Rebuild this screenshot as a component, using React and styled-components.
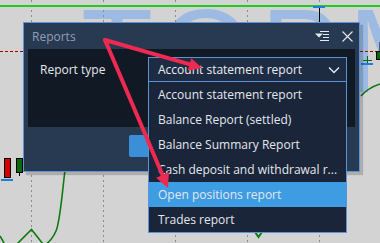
import React from 'react'
import styled, { createGlobalStyle } from 'styled-components'

const GlobalStyle = createGlobalStyle`
  html, body {
    margin: 0;
    padding: 0;
    background: #d3d3d3;
  }
  * { box-sizing: border-box; }
`

const reportTypes = [
  'Account statement report',
  'Balance Report (settled)',
  'Balance Summary Report',
  'Cash deposit and withdrawal r...',
  'Open positions report',
  'Trades report',
]

const Stage = styled.div`
  position: relative;
  width: 380px;
  height: 243px;
  overflow: hidden;
  background: #d3d3d3;
  font-family: "Open Sans", "Noto Sans", sans-serif;
  font-size: 12px;
`

const Watermark = styled.div`
  position: absolute;
  left: 81px;
  top: -8px;
  font-family: "Liberation Sans", Arial, sans-serif;
  font-size: 118px;
  line-height: 118px;
  letter-spacing: 9px;
  color: #9dbae3;
  white-space: nowrap;
  user-select: none;
`

const Layer = styled.svg`
  position: absolute;
  left: 0;
  top: 0;
  pointer-events: none;
`

const Dialog = styled.div`
  position: absolute;
  left: 23px;
  top: 22px;
  width: 337px;
  height: 150px;
  display: flex;
  flex-direction: column;
  background: #283a52;
  border: 1px solid #5d95d8;
  box-shadow: 3px 3px 1px rgba(0, 0, 0, 0.18);
`

const Header = styled.div`
  height: 26px;
  display: flex;
  align-items: center;
  padding: 0 6px 0 8px;
  gap: 13px;
`

const Title = styled.div`
  flex: 1;
  color: #909fb3;
  font-size: 12px;
`

const IconBtn = styled.div`
  display: flex;
  align-items: center;
  justify-content: center;
  color: #e4e9f0;
`

const Panel = styled.div`
  height: 78px;
  margin: 0 4px;
  background: #111925;
  display: flex;
  align-items: flex-start;
  padding: 8px 8px 0 12px;
`

const Label = styled.div`
  width: 108px;
  line-height: 25px;
  color: #e6e8ec;
`

const SelectWrap = styled.div`
  position: relative;
  flex: 1;
`

const SelectBox = styled.div`
  height: 25px;
  display: flex;
  align-items: center;
  justify-content: space-between;
  padding: 0 6px 0 9px;
  background: #1e2c43;
  border: 1px solid #5b93d6;
  color: #e8ecf2;
`

const List = styled.div`
  position: absolute;
  left: 0;
  right: 0;
  top: 25px;
  background: #1b2539;
  border: 1px solid #5b93d6;
  border-top: none;
  z-index: 2;
`

const Item = styled.div`
  height: 25px;
  line-height: 25px;
  padding-left: 9px;
  white-space: nowrap;
  overflow: hidden;
  color: #e2e7ee;
  background: ${p => (p.$active ? '#3d9ce2' : 'transparent')};
`

const Footer = styled.div`
  flex: 1;
  display: flex;
  justify-content: center;
  align-items: flex-start;
  padding-top: 8px;
`

const Button = styled.div`
  width: 125px;
  height: 22px;
  background: #3a8fd6;
  border-radius: 2px;
`

const Chart = () => (
  <Layer width="380" height="243">
    <g stroke="#8c8c8c" strokeWidth="1" strokeDasharray="2 3">
      {[31.5, 103.5, 175.5, 247.5, 319.5].map(x => (
        <line key={x} x1={x} y1="0" x2={x} y2="243" />
      ))}
    </g>
    <line x1="0" y1="6" x2="380" y2="6" stroke="#1fcc1f" strokeWidth="2" />
    <line x1="319.5" y1="7" x2="319.5" y2="23" stroke="#000" />
    <rect x="313" y="6" width="12" height="2" fill="#1a7fe0" />
    <g stroke="#a30000" strokeWidth="1" strokeDasharray="3 2">
      <line x1="0" y1="51.5" x2="23" y2="51.5" />
      <line x1="360" y1="51.5" x2="380" y2="51.5" />
    </g>
    <rect x="4.5" y="158.5" width="6" height="19" fill="#d40000" stroke="#000" />
    <rect x="1" y="179" width="12" height="2" fill="#1a7fe0" />
    <rect x="16.5" y="158.5" width="6" height="14" fill="#0a6a0a" stroke="#000" />
    <line x1="19.5" y1="172" x2="19.5" y2="176" stroke="#000" />
    <rect x="361" y="63" width="12" height="2" fill="#1a7fe0" />
    <line x1="367.5" y1="56" x2="367.5" y2="63" stroke="#0a6a0a" />
    <line x1="363" y1="60.5" x2="372" y2="60.5" stroke="#0a6a0a" />
    <line x1="380" y1="42" x2="380" y2="52" stroke="#000" />
    <rect x="376.5" y="51.5" width="6" height="8" fill="#0a6a0a" stroke="#000" />
    <g fill="none" stroke="#0d7a10" strokeWidth="1.6">
      <path d="M65 170 C 62 195, 60 222, 56 231 Q 52 240, 46 244" />
      <path d="M0 236 L 4 243 M 17 244 L 31.5 229.5 L 43 244" />
      <path d="M361 96 Q 368 88, 380 84" />
      <path d="M255 232 L 258.5 237 L 262 232" strokeWidth="2" />
    </g>
  </Layer>
)

const Arrows = () => (
  <Layer width="380" height="243" style={{ zIndex: 5 }}>
    <g stroke="#ee2a50" strokeWidth="4" strokeLinecap="round" fill="none">
      <line x1="105" y1="40" x2="190" y2="64.4" />
      <line x1="105" y1="40" x2="162.5" y2="175" />
    </g>
    <polygon points="202,68 187.7,70.6 191.3,58.2" fill="#ee2a50" />
    <polygon points="168,188 156.1,177.8 168.9,172.4" fill="#ee2a50" />
  </Layer>
)

const App = () => {
  return (
    <Stage>
      <GlobalStyle />
      <Watermark>TOPM</Watermark>
      <Chart />
      <Dialog>
        <Header>
          <Title>Reports</Title>
          <IconBtn>
            <svg width="14" height="10" viewBox="0 0 14 10">
              <path d="M5 0.5 H14 M8 3.5 H14 M8 6.5 H14 M5 9.5 H14" stroke="currentColor" strokeWidth="1" />
              <path d="M0 2.5 H8 L4 6.5 Z" fill="currentColor" />
            </svg>
          </IconBtn>
          <IconBtn>
            <svg width="11" height="11" viewBox="0 0 11 11">
              <path d="M0.5 0.5 L10.5 10.5 M10.5 0.5 L0.5 10.5" stroke="currentColor" strokeWidth="1.1" />
            </svg>
          </IconBtn>
        </Header>
        <Panel>
          <Label>Report type</Label>
          <SelectWrap>
            <SelectBox>
              <span>Account statement report</span>
              <svg width="12" height="8" viewBox="0 0 12 8">
                <path d="M1 1.5 L6 6.5 L11 1.5" fill="none" stroke="#e8ecf2" strokeWidth="1.3" />
              </svg>
            </SelectBox>
            <List>
              {reportTypes.map((r, i) => (
                <Item key={r} $active={i === 4}>{r}</Item>
              ))}
            </List>
          </SelectWrap>
        </Panel>
        <Footer>
          <Button />
        </Footer>
      </Dialog>
      <Arrows />
    </Stage>
  )
}

export default App
